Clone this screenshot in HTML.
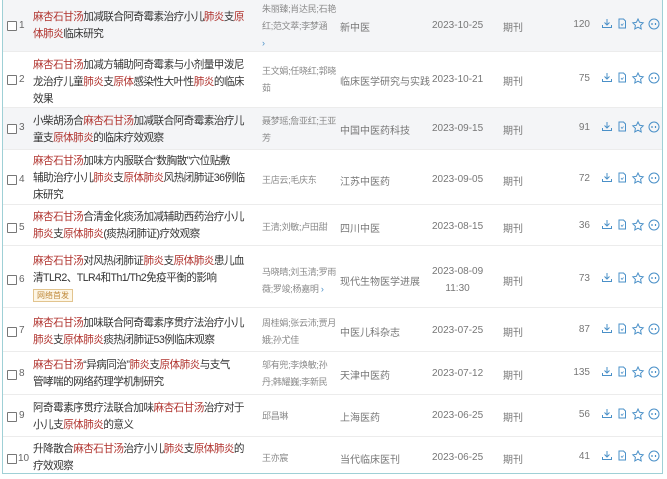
<!DOCTYPE html>
<html><head><meta charset="utf-8"><style>
*{margin:0;padding:0;box-sizing:border-box}
body{width:667px;height:479px;background:#fff;font-family:"Liberation Sans","Noto Sans CJK SC",sans-serif;position:relative;overflow:hidden}
.frame{position:absolute;left:2px;top:0;width:661px;height:474px;border:1.5px solid #9fd0d6;border-top:none}
.row{position:absolute;left:3px;width:659px;border-bottom:1px solid #ececec}
.g{background:#f4f5f7}
.cb{position:absolute;left:4px;width:10px;height:10px;border:1px solid #777;background:#fff;border-radius:1px}
.no{position:absolute;left:16px;font-size:10px;color:#666}
.t{position:absolute;left:30px;font-size:10.6px;letter-spacing:-0.55px;line-height:17px;color:#333;white-space:nowrap}
.t b{font-weight:normal;color:#b0332e}
.au{position:absolute;left:259px;font-size:9px;letter-spacing:-0.3px;line-height:17px;color:#8a8a8a;white-space:nowrap}
.src{position:absolute;left:337px;font-size:10px;color:#777;white-space:nowrap}
.dt{position:absolute;left:429px;font-size:10px;color:#777;white-space:nowrap;text-align:center;line-height:17px}
.ty{position:absolute;left:500px;font-size:10px;color:#777}
.n{position:absolute;right:72px;font-size:10px;color:#777}
.ic{position:absolute;left:598px}
.tag{display:inline-block;font-size:8px;letter-spacing:0;color:#c08a3a;border:1px solid #e2c48e;background:#fdf6e6;line-height:11px;padding:0 3px;margin-top:2px}
</style></head><body>
<div class="frame"></div>

<svg width="0" height="0" style="position:absolute">
<defs>
<g id="icons" fill="none" stroke-width="1">
<g stroke="#4a90c8"><path d="M6 1v6M3.5 4.5L6 7l2.5-2.5M1.5 7v2.5h9V7"/></g>
<g stroke="#4a90c8"><path d="M18 1h4.5l2 2v7h-6.5z"/><path d="M20 6l1 1.5 1.5-2" stroke-width=".7"/></g>
<g stroke="#4a90c8"><path d="M37 1l1.6 3.3 3.6.5-2.6 2.5.6 3.6-3.2-1.7-3.2 1.7.6-3.6-2.6-2.5 3.6-.5z"/></g>
<g stroke="#4a90c8"><circle cx="53" cy="6" r="5"/><path d="M51 5v2M54.5 5v2" stroke-width="1.2"/></g>
</g></defs></svg>

<div class="row g" style="top:0;height:52px">
<div class="cb" style="top:21px"></div><div class="no" style="top:20px">1</div>
<div class="t" style="top:9px"><b>麻杏石甘汤</b>加减联合阿奇霉素治疗小儿<b>肺炎</b>支<b>原</b><br><b>体肺炎</b>临床研究</div>
<div class="au" style="top:1px">朱丽臻;肖达民;石艳<br>红;范文萃;李梦涵<br><span style="color:#4a90c8">›</span></div>
<div class="src" style="top:19px">新中医</div><div class="dt" style="top:17px">2023-10-25</div><div class="ty" style="top:19px">期刊</div><div class="n" style="top:19px">120</div>
<svg class="ic" style="top:18px" width="62" height="12"><use href="#icons"/></svg>
</div>
<div class="row" style="top:52px;height:56px">
<div class="cb" style="top:23px"></div><div class="no" style="top:22px">2</div>
<div class="t" style="top:5px"><b>麻杏石甘汤</b>加减方辅助阿奇霉素与小剂量甲泼尼<br>龙治疗儿童<b>肺炎</b>支<b>原体</b>感染性大叶性<b>肺炎</b>的临床<br>效果</div>
<div class="au" style="top:11px">王文娟;任晓红;郭晓<br>茹</div>
<div class="src" style="top:21px">临床医学研究与实践</div><div class="dt" style="top:19px">2023-10-21</div><div class="ty" style="top:21px">期刊</div><div class="n" style="top:21px">75</div>
<svg class="ic" style="top:20px" width="62" height="12"><use href="#icons"/></svg>
</div>
<div class="row g" style="top:108px;height:42px">
<div class="cb" style="top:16px"></div><div class="no" style="top:14px">3</div>
<div class="t" style="top:5px">小柴胡汤合<b>麻杏石甘汤</b>加减联合阿奇霉素治疗儿<br>童支<b>原体肺炎</b>的临床疗效观察</div>
<div class="au" style="top:5px">聂梦瑶;詹亚红;王亚<br>芳</div>
<div class="src" style="top:14px">中国中医药科技</div><div class="dt" style="top:12px">2023-09-15</div><div class="ty" style="top:14px">期刊</div><div class="n" style="top:14px">91</div>
<svg class="ic" style="top:13px" width="62" height="12"><use href="#icons"/></svg>
</div>
<div class="row" style="top:150px;height:55px">
<div class="cb" style="top:25px"></div><div class="no" style="top:24px">4</div>
<div class="t" style="top:3px"><b>麻杏石甘汤</b>加味方内服联合“数胸散”穴位贴敷<br>辅助治疗小儿<b>肺炎</b>支<b>原体肺炎</b>风热闭肺证36例临<br>床研究</div>
<div class="au" style="top:22px">王店云;毛庆东</div>
<div class="src" style="top:23px">江苏中医药</div><div class="dt" style="top:21px">2023-09-05</div><div class="ty" style="top:23px">期刊</div><div class="n" style="top:23px">72</div>
<svg class="ic" style="top:22px" width="62" height="12"><use href="#icons"/></svg>
</div>
<div class="row" style="top:205px;height:41px">
<div class="cb" style="top:18px"></div><div class="no" style="top:17px">5</div>
<div class="t" style="top:4px"><b>麻杏石甘汤</b>合清金化痰汤加减辅助西药治疗小儿<br><b>肺炎</b>支<b>原体肺炎</b>(痰热闭肺证)疗效观察</div>
<div class="au" style="top:14px">王清;刘敏;卢田甜</div>
<div class="src" style="top:15px">四川中医</div><div class="dt" style="top:13px">2023-08-15</div><div class="ty" style="top:15px">期刊</div><div class="n" style="top:15px">36</div>
<svg class="ic" style="top:14px" width="62" height="12"><use href="#icons"/></svg>
</div>
<div class="row" style="top:246px;height:62px">
<div class="cb" style="top:29px"></div><div class="no" style="top:28px">6</div>
<div class="t" style="top:7px"><b>麻杏石甘汤</b>对风热闭肺证<b>肺炎</b>支<b>原体肺炎</b>患儿血<br>清TLR2、TLR4和Th1/Th2免疫平衡的影响<br><span class="tag">网络首发</span></div>
<div class="au" style="top:18px">马晓晴;刘玉清;罗雨<br>薇;罗竣;杨嘉明 <span style="color:#4a90c8">›</span></div>
<div class="src" style="top:27px">现代生物医学进展</div><div class="dt" style="top:17px">2023-08-09<br>11:30</div><div class="ty" style="top:27px">期刊</div><div class="n" style="top:27px">73</div>
<svg class="ic" style="top:26px" width="62" height="12"><use href="#icons"/></svg>
</div>
<div class="row" style="top:308px;height:44px">
<div class="cb" style="top:19px"></div><div class="no" style="top:17px">7</div>
<div class="t" style="top:7px"><b>麻杏石甘汤</b>加味联合阿奇霉素序贯疗法治疗小儿<br><b>肺炎</b>支<b>原体肺炎</b>痰热闭肺证53例临床观察</div>
<div class="au" style="top:7px">周桂娟;张云沛;贾月<br>娥;孙尤佳</div>
<div class="src" style="top:16px">中医儿科杂志</div><div class="dt" style="top:14px">2023-07-25</div><div class="ty" style="top:16px">期刊</div><div class="n" style="top:16px">87</div>
<svg class="ic" style="top:15px" width="62" height="12"><use href="#icons"/></svg>
</div>
<div class="row" style="top:352px;height:43px">
<div class="cb" style="top:18px"></div><div class="no" style="top:16px">8</div>
<div class="t" style="top:5px"><b>麻杏石甘汤</b>“异病同治”<b>肺炎</b>支<b>原体肺炎</b>与支气<br>管哮喘的网络药理学机制研究</div>
<div class="au" style="top:5px">邬有兜;李焕敏;孙<br>丹;韩耀巍;李新民</div>
<div class="src" style="top:15px">天津中医药</div><div class="dt" style="top:13px">2023-07-12</div><div class="ty" style="top:15px">期刊</div><div class="n" style="top:15px">135</div>
<svg class="ic" style="top:14px" width="62" height="12"><use href="#icons"/></svg>
</div>
<div class="row" style="top:395px;height:42px">
<div class="cb" style="top:17px"></div><div class="no" style="top:15px">9</div>
<div class="t" style="top:5px">阿奇霉素序贯疗法联合加味<b>麻杏石甘汤</b>治疗对于<br>小儿支<b>原体肺炎</b>的意义</div>
<div class="au" style="top:13px">邱昌琳</div>
<div class="src" style="top:14px">上海医药</div><div class="dt" style="top:12px">2023-06-25</div><div class="ty" style="top:14px">期刊</div><div class="n" style="top:14px">56</div>
<svg class="ic" style="top:13px" width="62" height="12"><use href="#icons"/></svg>
</div>
<div class="row" style="top:437px;height:37px;border-bottom:none">
<div class="cb" style="top:17px"></div><div class="no" style="top:16px;left:15px">10</div>
<div class="t" style="top:4px">升降散合<b>麻杏石甘汤</b>治疗小儿<b>肺炎</b>支<b>原体肺炎</b>的<br>疗效观察</div>
<div class="au" style="top:13px">王亦宸</div>
<div class="src" style="top:14px">当代临床医刊</div><div class="dt" style="top:12px">2023-06-25</div><div class="ty" style="top:14px">期刊</div><div class="n" style="top:14px">41</div>
<svg class="ic" style="top:13px" width="62" height="12"><use href="#icons"/></svg>
</div>
</body></html>
